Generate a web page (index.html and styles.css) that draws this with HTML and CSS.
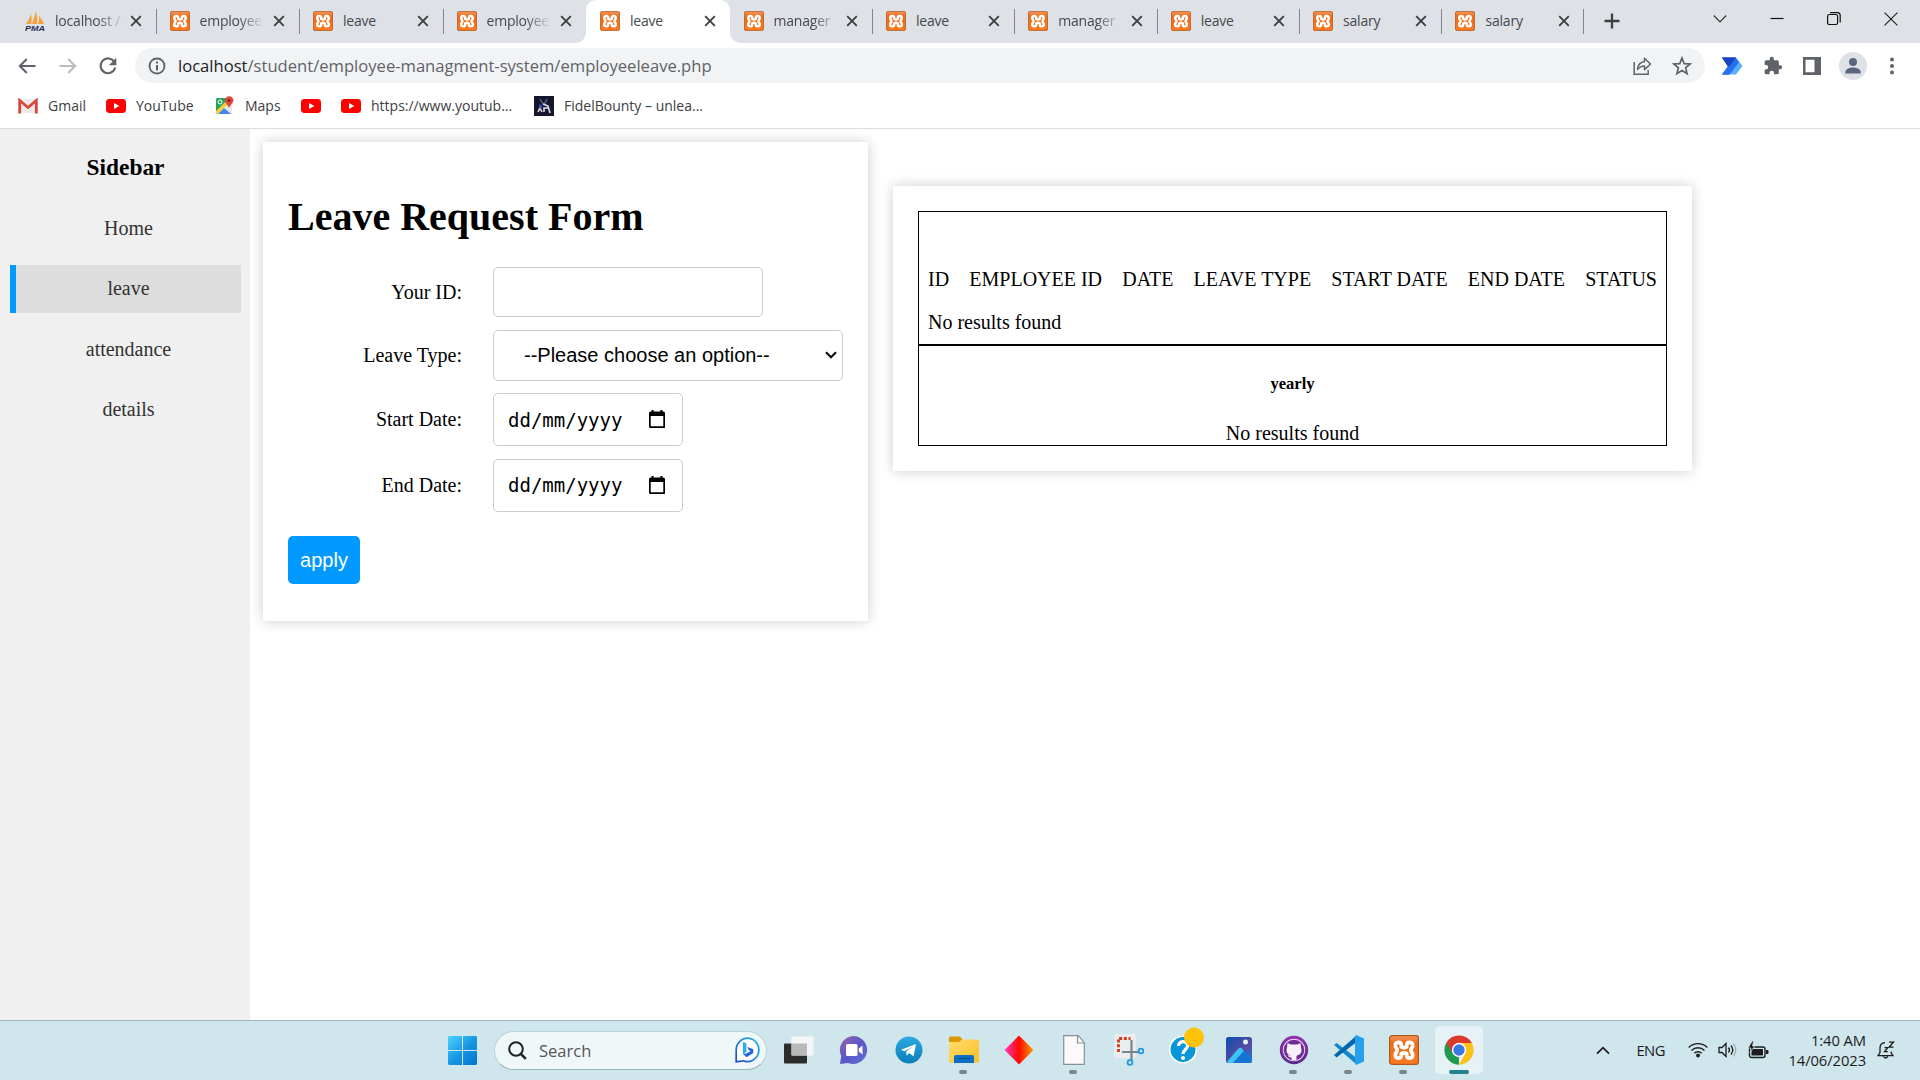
FILE: index.html
```html
<!DOCTYPE html>
<html lang="en">
<head>
<meta charset="utf-8">
<title>leave</title>
<link rel="stylesheet" href="styles.css">
</head>
<body>
<svg class="defs" width="0" height="0">
  <defs>
    <linearGradient id="gOrange" x1="0" y1="0" x2="0" y2="1"><stop offset="0" stop-color="#f5995c"/><stop offset=".18" stop-color="#ef7a30"/><stop offset=".25" stop-color="#ee6c1a"/><stop offset="1" stop-color="#fb7a20"/></linearGradient>
    <linearGradient id="gWin" x1="0" y1="0" x2="1" y2="1"><stop offset="0" stop-color="#4cd4ff"/><stop offset=".5" stop-color="#1a98e2"/><stop offset="1" stop-color="#0072d0"/></linearGradient>
    <linearGradient id="gBing" x1="1" y1="0" x2="0" y2="1"><stop offset="0" stop-color="#22b8ee"/><stop offset="1" stop-color="#1b48c4"/></linearGradient>
    <linearGradient id="gChat" x1="0" y1="0" x2="1" y2="1"><stop offset="0" stop-color="#9a62a8"/><stop offset=".5" stop-color="#5b58c8"/><stop offset="1" stop-color="#6070d8"/></linearGradient>
    <linearGradient id="gTele" x1="0" y1="0" x2="0" y2="1"><stop offset="0" stop-color="#2ea9e0"/><stop offset="1" stop-color="#0a7dba"/></linearGradient>
    <linearGradient id="gFold" x1="0" y1="0" x2="1" y2="1"><stop offset="0" stop-color="#ffdd70"/><stop offset="1" stop-color="#fbbf24"/></linearGradient>
    <linearGradient id="gDia"><stop offset="0" stop-color="#ff3cc0"/><stop offset=".5" stop-color="#ff0800"/><stop offset="1" stop-color="#ffa000"/></linearGradient>
    <linearGradient id="gPhoto" x1="0" y1="0" x2="1" y2="1"><stop offset="0" stop-color="#0a4fb0"/><stop offset=".6" stop-color="#5a4aa4"/><stop offset="1" stop-color="#1878d0"/></linearGradient>
    <linearGradient id="gGit" x1="0" y1="0" x2="0" y2="1"><stop offset="0" stop-color="#9030ac"/><stop offset="1" stop-color="#5c2a90"/></linearGradient>
    <symbol id="xampp" viewBox="0 0 30 30">
      <rect x=".6" y=".6" width="28.8" height="28.8" rx="2.6" fill="url(#gOrange)" stroke="#b4561a" stroke-width="1.2"/>
      <path d="M12.300 10C12 6.500 6.300 6.500 6.300 10.500C6.300 13 8.200 13.300 8.200 15.200C8.200 17 6.300 17.500 6.300 20C6.300 24 12 24 12.300 20.500V18.600Q15 17 17.700 18.600V20.500C18 24 23.700 24 23.700 20C23.700 17.500 21.800 17 21.800 15.200C21.800 13.300 23.700 13 23.700 10.500C23.700 6.500 18 6.500 17.700 10V11.800Q15 13.400 12.300 11.800Z" fill="none" stroke="#fff" stroke-width="3.700" stroke-linejoin="round"/>
    </symbol>
    <symbol id="close" viewBox="0 0 12 12"><path d="M1.200 1.200l9.600 9.600M10.800 1.200L1.200 10.800" stroke="#3c4043" stroke-width="1.900" fill="none"/></symbol>
    <symbol id="youtube" viewBox="0 0 20 14"><rect width="20" height="14" rx="3.400" fill="#f00"/><path d="M8 4l5.400 3L8 10z" fill="#fff"/></symbol>
    <symbol id="calendar" viewBox="0 0 16 18"><path d="M2.600 0h2v1.600h6.800V0h2v1.600h1a1.600 1.600 0 0 1 1.600 1.600v12.900A1.500 1.500 0 0 1 14.500 18h-13A1.500 1.500 0 0 1 0 16.500V3.200A1.600 1.600 0 0 1 1.600 1.600h1zM1.700 6v10.300h12.600V6z"/></symbol>
  </defs>
</svg>

<header class="tabs">
  <div class="tab plain first">
    <svg width="20" height="20" viewBox="0 0 20 20"><path d="M1 13Q4 9 6 3q1.500 5 0 10zM7 13Q9 7 11 0q2 7 1 13zM13 13q1.500-4 1-8 3 3 5 8z" fill="#f8a13a"/><text x="0" y="19.500" class="pma" textLength="20" lengthAdjust="spacingAndGlyphs">PMA</text></svg>
    <span class="tab-title fade">localhost /</span><svg class="x" width="12" height="12"><use href="#close"/></svg>
  </div>
  <div class="tab"><svg width="20" height="20"><use href="#xampp"/></svg><span class="tab-title fade">employee</span><svg class="x" width="12" height="12"><use href="#close"/></svg></div>
  <div class="tab"><svg width="20" height="20"><use href="#xampp"/></svg><span class="tab-title">leave</span><svg class="x" width="12" height="12"><use href="#close"/></svg></div>
  <div class="tab"><svg width="20" height="20"><use href="#xampp"/></svg><span class="tab-title fade">employee</span><svg class="x" width="12" height="12"><use href="#close"/></svg></div>
  <div class="tab active"><svg width="20" height="20"><use href="#xampp"/></svg><span class="tab-title">leave</span><svg class="x" width="12" height="12"><use href="#close"/></svg></div>
  <div class="tab plain"><svg width="20" height="20"><use href="#xampp"/></svg><span class="tab-title fade">manager</span><svg class="x" width="12" height="12"><use href="#close"/></svg></div>
  <div class="tab"><svg width="20" height="20"><use href="#xampp"/></svg><span class="tab-title">leave</span><svg class="x" width="12" height="12"><use href="#close"/></svg></div>
  <div class="tab"><svg width="20" height="20"><use href="#xampp"/></svg><span class="tab-title fade">manager</span><svg class="x" width="12" height="12"><use href="#close"/></svg></div>
  <div class="tab"><svg width="20" height="20"><use href="#xampp"/></svg><span class="tab-title">leave</span><svg class="x" width="12" height="12"><use href="#close"/></svg></div>
  <div class="tab"><svg width="20" height="20"><use href="#xampp"/></svg><span class="tab-title">salary</span><svg class="x" width="12" height="12"><use href="#close"/></svg></div>
  <div class="tab"><svg width="20" height="20"><use href="#xampp"/></svg><span class="tab-title">salary</span><svg class="x" width="12" height="12"><use href="#close"/></svg></div>
  <div class="new-tab"><svg width="16" height="16" viewBox="0 0 16 16"><path d="M8 .5v15M.5 8h15" stroke="#3c4043" stroke-width="2.300"/></svg></div>
  <div class="window-controls">
    <svg width="14" height="38" viewBox="0 0 14 38"><path d="M.8 15.500L7 22l6.200-6.500" fill="none" stroke="#333" stroke-width="1.100"/></svg>
    <svg width="14" height="38" viewBox="0 0 14 38"><path d="M.5 18.500h13" stroke="#111" stroke-width="1.200"/></svg>
    <svg width="14" height="38" viewBox="0 0 14 38"><rect x=".6" y="14.500" width="10" height="10" rx="1.800" fill="none" stroke="#111" stroke-width="1.200"/><path d="M3 12.600h7.400a2.800 2.800 0 0 1 2.800 2.800v7" fill="none" stroke="#111" stroke-width="1.200"/></svg>
    <svg width="14" height="38" viewBox="0 0 14 38"><path d="M.6 12.600l12.800 12.800M13.400 12.600L.6 25.400" stroke="#222" stroke-width="1.200"/></svg>
  </div>
</header>

<div class="toolbar">
  <div class="nav">
    <svg width="18" height="16" viewBox="0 0 18 16"><path d="M17.500 8H2M8.800 1L1.800 8l7 7" fill="none" stroke="#5f6368" stroke-width="2"/></svg>
    <svg width="18" height="16" viewBox="0 0 18 16"><path d="M.5 8H16M9.200 1l7 7-7 7" fill="none" stroke="#babcbe" stroke-width="2"/></svg>
    <svg width="18" height="18" viewBox="0 0 18 18"><path d="M15.400 5A7.400 7.400 0 1 0 16.200 10.600" fill="none" stroke="#5f6368" stroke-width="2.100"/><path d="M17.300.8v7.400H9.900z" fill="#5f6368"/></svg>
  </div>
  <div class="address">
    <svg width="18" height="18" viewBox="0 0 18 18"><circle cx="9" cy="9" r="7.500" fill="none" stroke="#5f6368" stroke-width="1.800"/><path d="M9 4.500v2M9 8v5.500" stroke="#5f6368" stroke-width="2"/></svg>
    <span class="url"><b>localhost</b>/student/employee-managment-system/employeeleave.php</span>
    <svg class="share" width="20" height="20" viewBox="0 0 20 20"><path d="M2.200 6v12.200h14V14" fill="none" stroke="#5f6368" stroke-width="1.500"/><path d="M5.500 13.500C6 8.500 9 6 12.500 5.800V2.200L18.500 8l-6 5.600V10C9.500 10 7.500 11 5.500 13.500z" fill="none" stroke="#5f6368" stroke-width="1.500" stroke-linejoin="round"/></svg>
    <svg width="20" height="20" viewBox="0 0 20 20"><path d="M10 2l2.200 5.600 6 .4-4.600 3.900 1.500 5.800L10 14.500l-5.100 3.200 1.500-5.800L1.800 8l6-.4z" fill="none" stroke="#5f6368" stroke-width="1.700"/></svg>
  </div>
  <div class="actions">
    <svg width="22" height="18" viewBox="0 0 22 18"><path d="M1 .5h14L8.500 9z" fill="#1742c0"/><path d="M1 17.500L14.500.5H15L21.500 9 15 17.500z" fill="#5ab0ff"/><path d="M1 17.500L14.300.5l3.700 4.800L8.500 17.500z" fill="#2670f0"/><path d="M1 .5l5.800 8.800L1 17.500h7L14 9z" fill="#2670f0"/><path d="M1 .5h14L8.500 9 6.800 9.200z" fill="#1742c0"/></svg>
    <svg width="20" height="20" viewBox="0 0 24 24"><path fill="#5f6368" d="M20.500 11H19V7a2 2 0 0 0-2-2h-4V3.500a2.500 2.500 0 0 0-5 0V5H4a2 2 0 0 0-2 2v3.800h1.500a2.700 2.700 0 0 1 0 5.400H2V20a2 2 0 0 0 2 2h3.800v-1.500a2.700 2.700 0 0 1 5.400 0V22H17a2 2 0 0 0 2-2v-4h1.500a2.500 2.500 0 0 0 0-5z"/></svg>
    <svg width="18" height="18" viewBox="0 0 18 18"><path fill="#5f6368" fill-rule="evenodd" d="M0 0h18v18H0zM2.500 2.800v12.400h9V2.800z"/></svg>
    <svg width="28" height="28" viewBox="0 0 28 28"><circle cx="14" cy="14" r="14" fill="#dee1e6"/><circle cx="14" cy="10" r="4" fill="#5a6680"/><path d="M6.300 21.500v-1.500c0-3.300 5-4.600 7.700-4.600s7.700 1.300 7.700 4.600v1.500z" fill="#5a6680"/></svg>
    <svg width="6" height="18" viewBox="0 0 6 18"><g fill="#5f6368"><circle cx="3" cy="2.500" r="2"/><circle cx="3" cy="9" r="2"/><circle cx="3" cy="15.500" r="2"/></g></svg>
  </div>
</div>

<nav class="bookmarks">
  <div class="bookmark"><svg width="20" height="16" viewBox="0 0 20 16"><rect x="1" y="1" width="18" height="14" fill="#ececec"/><path d="M1.700 15.500V2.500L10 9.500l8.300-7v13" fill="none" stroke="#db4437" stroke-width="2.800"/></svg>Gmail</div>
  <div class="bookmark"><svg width="20" height="14"><use href="#youtube"/></svg>YouTube</div>
  <div class="bookmark"><svg width="20" height="20" viewBox="0 0 20 20"><rect x="1" y="2" width="16" height="16" rx="1.500" fill="#26a35a"/><path d="M1 18L14 5l3 3v10z" fill="#e8e8e8"/><path d="M3 18l6-6 7 6z" fill="#4285f4"/><path d="M1 15L14 2.500l2 2L3 18H1z" fill="#fbce37"/><path d="M14 12.500C13.500 9 10 7.500 10 4.500a4.200 4.200 0 0 1 8.400 0c0 3-3.900 4.500-4.400 8z" fill="#e5443a"/><circle cx="14.200" cy="4.600" r="1.500" fill="#7b241e"/><circle cx="5" cy="6" r="2" fill="none" stroke="#fff"/></svg>Maps</div>
  <div class="bookmark"><svg width="20" height="14"><use href="#youtube"/></svg></div>
  <div class="bookmark"><svg width="20" height="14"><use href="#youtube"/></svg>https://www.youtub...</div>
  <div class="bookmark"><svg width="20" height="20" viewBox="0 0 20 20"><rect width="20" height="20" fill="#15152c"/><path d="M6 3l3 5M13 3l-3 6" fill="none" stroke="#5f6890" stroke-width="1.300"/><path d="M9 8l5 2 2 7M10 16v-4h4M4 16l2-4 2 4" fill="none" stroke="#dcdde4" stroke-width="1.600"/><path d="M5 8l4 2-3 3z" fill="#3355b8"/></svg>FidelBounty – unlea...</div>
</nav>

<main class="page">
  <aside class="sidebar">
    <h3>Sidebar</h3>
    <a class="side-link">Home</a>
    <a class="side-link current">leave</a>
    <a class="side-link">attendance</a>
    <a class="side-link">details</a>
  </aside>
  <section class="card form-card">
    <h1>Leave Request Form</h1>
    <div class="fields">
      <label>Your ID:</label><input class="control id-input" type="text">
      <label>Leave Type:</label>
      <div class="control select">--Please choose an option--<svg width="12" height="8" viewBox="0 0 12 8"><path d="M1 1.200l5 5 5-5" fill="none" stroke="#111" stroke-width="2.200"/></svg></div>
      <label>Start Date:</label>
      <div class="control date"><span>dd/mm/yyyy</span><svg width="16" height="18"><use href="#calendar"/></svg></div>
      <label>End Date:</label>
      <div class="control date"><span>dd/mm/yyyy</span><svg width="16" height="18"><use href="#calendar"/></svg></div>
    </div>
    <button class="apply">apply</button>
  </section>
  <section class="card table-card">
    <div class="box requests">
      <div class="columns"><span>ID</span><span>EMPLOYEE ID</span><span>DATE</span><span>LEAVE TYPE</span><span>START DATE</span><span>END DATE</span><span>STATUS</span></div>
      <div>No results found</div>
    </div>
    <div class="box yearly">
      <h5>yearly</h5>
      <div>No results found</div>
    </div>
  </section>
</main>

<footer class="taskbar">
  <svg class="start" width="29" height="29" viewBox="0 0 29 29"><path d="M1 0h13v14H0V1zM15 0h13l1 1v13H15zM0 15h14v14H1l-1-1zM15 15h14v13l-1 1H15z" fill="url(#gWin)"/></svg>
  <div class="search">
    <svg width="19" height="19" viewBox="0 0 19 19"><circle cx="8" cy="8" r="6.800" fill="none" stroke="#222" stroke-width="2"/><path d="M12.800 12.800l5 5" stroke="#222" stroke-width="2.600"/></svg>
    <span>Search</span>
    <svg width="26" height="26" viewBox="0 0 26 26"><path d="M13 1.200A11.700 11.700 0 1 1 8 23.800L1.200 24.800V13A11.700 11.700 0 0 1 13 1.200z" fill="#fff" stroke="url(#gBing)" stroke-width="1.700"/><path d="M8 5l3.400 1.200v8.600L8 17.500z" fill="#2bb0ee"/><path d="M8 17l3.500 3.300 6.800-4.200v-3.900L12.400 10l1.300 3.200 2 .9-4.300 2.500z" fill="#2366dc"/></svg>
  </div>
  <div class="apps">
    <div class="app"><svg width="30" height="28" viewBox="0 0 30 28"><rect y="7.500" width="23" height="20" rx="1" fill="#2c2c2c"/><rect x="7.500" y=".5" width="22" height="19" rx="1" fill="#f5f5f5"/><path d="M7.500 7.500H23v12H7.500z" fill="#b9b9b9"/></svg></div>
    <div class="app"><svg width="30" height="30" viewBox="0 0 30 30"><path d="M15 1A14 14 0 1 1 9 28L1 29l1.200-8A14 14 0 0 1 15 1z" fill="url(#gChat)"/><rect x="7" y="9" width="11.500" height="12" rx="1.500" fill="#fff"/><path d="M19.800 13.500l3.700-3v9l-3.700-3z" fill="#fff"/></svg></div>
    <div class="app"><svg width="28" height="28" viewBox="0 0 28 28"><circle cx="14" cy="14" r="13.500" fill="url(#gTele)"/><path d="M6 13.800L21 8l-2.400 12.300-4.500-3.200-2.300 2.600-.8-4.300L18 10.500l-8.600 4.700z" fill="#fff"/></svg></div>
    <div class="app running"><svg width="30" height="28" viewBox="0 0 30 28"><path d="M0 6V2Q0 .5 1.500.5H11l2.500 3-3 3z" fill="#dc9a00"/><path d="M0 6h10l3-2.500h16.500Q30 3.500 30 4v22.500H1l-1-1z" fill="url(#gFold)"/><path d="M5 27v-6q0-2 2-2h16q2 0 2 2v6z" fill="#0a6fc8"/><path d="M9 22.500h12" stroke="#084c8c"/></svg></div>
    <div class="app"><svg width="30" height="30" viewBox="0 0 30 30"><path d="M15 .5L29.500 15 15 29.500.5 15z" fill="url(#gDia)"/></svg></div>
    <div class="app running"><svg width="22" height="30" viewBox="0 0 22 30"><path d="M.7.700h14.600l6 7v21.600H.7z" fill="#fafafa" stroke="#8b8f90" stroke-width="1.200"/><path d="M14.500.7V8h6.800" fill="none" stroke="#8b8f90" stroke-width="1.200"/></svg></div>
    <div class="app"><svg width="30" height="32" viewBox="0 0 30 32"><rect width="22" height="24" rx="2" fill="#e9edef"/><path d="M4.500 18V4.500h12" fill="none" stroke="#d13a17" stroke-width="2.800" stroke-dasharray="3 1.700"/><path d="M17.500 6v20M8 18h17" stroke="#78868e" stroke-width="2.200"/><circle cx="27" cy="17" r="2.400" fill="none" stroke="#2196e3" stroke-width="1.800"/><circle cx="16" cy="28.500" r="2.400" fill="none" stroke="#2196e3" stroke-width="1.800"/></svg></div>
    <div class="app help"><svg width="42" height="42" viewBox="0 0 42 42"><circle cx="20" cy="23.500" r="13.300" fill="#0796d8" stroke="#fff" stroke-width="1.600"/><path d="M15.500 20c0-6 9.500-5.500 9 0 0 3.500-4.500 3.500-4.500 8" fill="none" stroke="#fff" stroke-width="3.300"/><circle cx="20" cy="32" r="2.100" fill="#fff"/><circle cx="31" cy="11.500" r="10" fill="#ffc20a"/></svg></div>
    <div class="app"><svg width="26" height="26" viewBox="0 0 26 26"><rect width="26" height="26" rx="2.500" fill="url(#gPhoto)"/><path d="M1 25.500L12 12.500q2-2.500 4.500-.5L26 20.500v3q0 2.500-2.500 2.500H2.500z" fill="#1674d4"/><path d="M.8 25L11.500 12.500q2.500-3 5-.5l1.200 2L7 26H2.500z" fill="#40c2f4"/><circle cx="19.500" cy="5" r="2.500" fill="#e6eef6"/></svg></div>
    <div class="app running"><svg width="30" height="30" viewBox="0 0 30 30"><circle cx="15" cy="15" r="12.700" fill="#e9d9f1" stroke="url(#gGit)" stroke-width="3"/><circle cx="15" cy="15" r="10.300" fill="#6f2c98"/><path d="M8.500 8l3.200 1.500h6.600L21.500 8l.5 4.500c1.500 5-.5 7.500-4.500 8.200V25h-5v-2.500c-2.500.3-3-1-4-2.500l4 .7C8.500 20 6.500 17 8 12.500z" fill="#f7effa"/></svg></div>
    <div class="app running"><svg width="30" height="30" viewBox="0 0 30 30"><path d="M0 10l2.500-2L22 22.500V29z" fill="#1485cf"/><path d="M0 20l2.500 2.500L22 7.500V1z" fill="#0068ae"/><path d="M22 0l8 3.500v23L22 30l-1-1V1z" fill="#26a0ec"/></svg></div>
    <div class="app running"><svg width="30" height="30"><use href="#xampp"/></svg></div>
    <div class="app running focused"><svg width="30" height="30" viewBox="0 0 30 30"><path d="M15 15v14.700A14.700 14.700 0 0 1 2.300 7.700z" fill="#1f9a50"/><path d="M15 8h12.900a14.700 14.700 0 0 1-12.900 21.700l6-11z" fill="#fbc116"/><path d="M2.300 7.700A14.700 14.700 0 0 1 27.900 8H15l-6 10.500z" fill="#dd3a2e"/><circle cx="15" cy="15" r="7.200" fill="#fff"/><circle cx="15" cy="15" r="5.700" fill="#3b78e7"/></svg></div>
  </div>
  <div class="tray">
    <svg width="14" height="9" viewBox="0 0 14 9"><path d="M1 7.700l6-6 6 6" fill="none" stroke="#1c1c1c" stroke-width="1.700"/></svg>
    <span class="lang">ENG</span>
    <svg width="20" height="16" viewBox="0 0 20 16"><g fill="none" stroke="#1c1c1c" stroke-width="1.400"><path d="M.7 5.500a13.200 13.200 0 0 1 18.600 0"/><path d="M3.500 8.500a9.200 9.200 0 0 1 13 0"/><path d="M6.300 11.300a5.200 5.200 0 0 1 7.400 0"/></g><circle cx="10" cy="13.500" r="1.900" fill="#1c1c1c"/></svg>
    <svg width="20" height="16" viewBox="0 0 20 16"><path d="M1 5.500h3L8 1.500v13l-4-4H1z" fill="none" stroke="#1c1c1c" stroke-width="1.300"/><path d="M10.500 5.500q2 2.500 0 5M13 3.500q3.500 4.500 0 9" fill="none" stroke="#1c1c1c" stroke-width="1.300"/><path d="M15.500 1.500q4.500 6.500 0 13" fill="none" stroke="#9fb0b5" stroke-width="1.300"/></svg>
    <svg width="21" height="18" viewBox="0 0 21 18"><rect x="1.500" y="6" width="15.500" height="10.500" rx="2" fill="none" stroke="#1c1c1c" stroke-width="1.400"/><rect x="3.500" y="8" width="11.500" height="6.500" fill="#1c1c1c"/><path d="M18 9h1.500q1 0 1 1v2q0 1-1 1H18z" fill="#1c1c1c"/><path d="M4.300 0L0 7h3l-1 4.800L6.800 5H4.500L5.500.3z" fill="#1c1c1c" stroke="#cfe6ec" stroke-width=".7"/></svg>
    <div class="clock"><div>1:40 AM</div><div>14/06/2023</div></div>
    <svg width="18" height="18" viewBox="0 0 18 18"><path d="M8 1.700Q3 2 3 7v4.500L1 14.700h15L14.300 12v-1.500M6.300 15.500q2 3 4.500 0" fill="none" stroke="#1c1c1c" stroke-width="1.300"/><path d="M12 1.200h4.500L12 6.200h4.500M7.500 6.700h3.300l-3.300 4h3.300" fill="none" stroke="#1c1c1c" stroke-width="1.300"/></svg>
  </div>
</footer>
</body>
</html>
```
FILE: styles.css
```css
* { box-sizing: border-box; }
body {
  margin: 0;
  width: 1920px;
  height: 1080px;
  overflow: hidden;
  display: flex;
  flex-direction: column;
  background: #fff;
  font-family: "Liberation Serif", "Times New Roman", serif;
  font-size: 20px;
  color: #000;
}
svg { display: block; flex: none; }
.defs { position: absolute; }

/* browser tabs */
.tabs {
  height: 43px;
  flex: none;
  display: flex;
  padding-left: 12px;
  background: #dee1e6;
  font: 14px "Open Sans", "Noto Sans", sans-serif;
  color: #45494d;
}
.tab {
  position: relative;
  width: 142.400px;
  height: 43px;
  flex: none;
  display: flex;
  align-items: center;
  padding: 0 14px 2px 14px;
}
.tab:nth-child(-n+5) { width: 143.500px; }
.tab.first { padding-left: 13px; }
.tab:not(.plain):not(.active)::before,
.tab:nth-child(11)::after {
  content: "";
  position: absolute;
  left: 0;
  top: 9px;
  width: 1px;
  height: 25px;
  background: #80868b;
}
.tab:nth-child(11)::after { left: auto; right: 0; }
.tab.active {
  background: #fff;
  border-radius: 10px 10px 0 0;
}
.tab.active::before, .tab.active::after {
  content: "";
  position: absolute;
  bottom: 0;
  width: 10px;
  height: 10px;
}
.tab.active::before { left: -10px; background: radial-gradient(circle at 0 0, transparent 9.500px, #fff 10px); }
.tab.active::after { right: -10px; background: radial-gradient(circle at 100% 0, transparent 9.500px, #fff 10px); }
.tab-title {
  width: 64px;
  margin-left: 10px;
  white-space: nowrap;
  letter-spacing: -.2px;
}
.first .tab-title { width: 70px; }
.fade { -webkit-mask-image: linear-gradient(90deg, #000 60%, transparent); mask-image: linear-gradient(90deg, #000 60%, transparent); }
.x { margin-left: auto; }
.pma { font: italic bold 8px "Liberation Sans", sans-serif; fill: #2e2d5c; }
.new-tab { width: 54px; padding: 13px 0 0 20px; }
.window-controls { margin-left: auto; display: flex; gap: 43px; padding-right: 22px; }

/* toolbar */
.toolbar {
  height: 45px;
  flex: none;
  display: flex;
  align-items: center;
  padding: 0 25px 0 18px;
}
.nav { display: flex; align-items: center; gap: 22.500px; width: 117px; }
.address {
  width: 1570px;
  height: 35px;
  display: flex;
  align-items: center;
  gap: 20px;
  padding: 0 13px;
  border-radius: 18px;
  background: #f1f3f4;
}
.url { margin-left: -8px; font: 16.600px "Open Sans", "Noto Sans", sans-serif; color: #5f6368; }
.url b { font-weight: 400; color: #202124; }
.share { margin-left: auto; }
.actions { flex: 1; display: flex; align-items: center; justify-content: space-between; padding-left: 16px; }
.actions svg:nth-child(4) { margin: 0 2px 0 -2px; }

.bookmarks {
  height: 41px;
  flex: none;
  display: grid;
  grid-template-columns: 88px 109px 86px 40px 193px auto;
  align-items: center;
  justify-content: start;
  padding: 0 0 5px 18px;
  border-bottom: 1px solid #dadce0;
  font: 14px "Open Sans", "Noto Sans", sans-serif;
  color: #3c4043;
  white-space: nowrap;
}
.bookmark { display: flex; align-items: center; gap: 10px; }

/* page */
.page {
  flex: 1;
  min-height: 0;
  display: flex;
  align-items: flex-start;
}
.sidebar {
  width: 250px;
  align-self: stretch;
  padding: 25px 9px 0 10px;
  background: #f0f0f0;
  text-align: center;
}
.sidebar h3 { margin: 0 0 23.500px; font-size: 23.400px; line-height: 27px; }
.side-link {
  display: block;
  height: 48px;
  margin-bottom: 12.500px;
  border-left: 6px solid transparent;
  line-height: 46px;
  color: #333;
}
.side-link.current { background: #ddd; border-left-color: #09f; }
.card { background: #fff; box-shadow: 0 0 12.500px rgba(0, 0, 0, .2); padding: 25px; }
.form-card { width: 605px; height: 479px; margin: 13px 0 0 13px; }
.form-card h1 { margin: 27px 0 27px; font-size: 40px; line-height: 46px; }
.fields {
  display: grid;
  grid-template-columns: 174px auto;
  column-gap: 31px;
  row-gap: 12.500px;
  justify-items: start;
  align-items: center;
}
.fields label { justify-self: end; }
.control { border: 1px solid #ccc; border-radius: 5px; background: #fff; }
.id-input { width: 270px; height: 50px; }
.select {
  width: 350px;
  height: 51px;
  display: flex;
  align-items: center;
  justify-content: space-between;
  padding: 0 5px 0 30px;
  font-family: "Liberation Sans", Arial, sans-serif;
}
.date {
  width: 190px;
  height: 53px;
  display: flex;
  align-items: center;
  justify-content: space-between;
  padding: 0 17px 0 14px;
  font: 19px "DejaVu Sans Mono", monospace;
}
.date svg { margin-bottom: 1px; }
.apply {
  display: block;
  width: 72px;
  height: 48px;
  margin-top: 24.500px;
  padding: 0;
  border: 0;
  border-radius: 5px;
  background: #09f;
  color: #fff;
  font: 20px "Liberation Sans", Arial, sans-serif;
}
.table-card { width: 799px; height: 285px; margin: 57px 0 0 25px; }
.box { border: 1px solid #000; white-space: nowrap; }
.requests { height: 134px; padding: 56px 9px 0; line-height: 23px; }
.columns { display: flex; justify-content: space-between; margin-bottom: 20px; }
.yearly { height: 101px; padding-top: 27px; text-align: center; line-height: 23px; }
.yearly h5 { margin: 0 0 27px; font-size: 16.600px; line-height: 22px; }

/* taskbar */
.taskbar {
  height: 60px;
  flex: none;
  display: flex;
  align-items: center;
  padding: 0 25px 1px 448px;
  border-top: 1px solid #a5b3b8;
  background: #cfe6ec;
  font-family: "Open Sans", "Noto Sans", sans-serif;
  color: #1c1c1c;
}
.search {
  width: 273px;
  height: 39px;
  margin-left: 17px;
  display: flex;
  align-items: center;
  padding: 0 5px 0 13px;
  border: 1px solid #b9d3da;
  border-bottom-color: #98b4bc;
  border-radius: 20px;
  background: #f0f7f9;
  font-size: 16.500px;
  color: #555;
}
.search span { flex: 1; margin-left: 12px; }
.apps { display: flex; margin-left: 4px; }
.app {
  position: relative;
  width: 55px;
  height: 48px;
  display: flex;
  align-items: center;
  justify-content: center;
}
.running::after {
  content: "";
  position: absolute;
  left: 23px;
  bottom: 0;
  width: 8px;
  height: 4px;
  border-radius: 2px;
  background: #7b8688;
}
.focused { width: 48px; margin-left: 3.500px; border-radius: 5px; background: #e7f2f6; }
.focused::after { left: 14px; width: 20px; background: #23828f; }
.help svg { margin-top: -6px; }
.tray { flex: 1; display: flex; align-items: center; padding-left: 113px; font-size: 14.800px; }
.lang { margin: 0 23px 0 27px; width: 28px; letter-spacing: -.6px; }
.tray svg + svg { margin-left: 10px; }
.clock { flex: 1; margin-right: 11px; text-align: right; line-height: 20px; letter-spacing: -.1px; }
```
